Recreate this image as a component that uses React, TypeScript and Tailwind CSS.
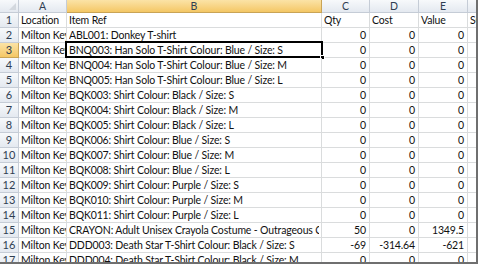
const rows: [string, string, string, string, string][] = [
  ["Milton Keynes", "ABL001: Donkey T-shirt", "0", "0", "0"],
  ["Milton Keynes", "BNQ003: Han Solo T-Shirt Colour: Blue / Size: S", "0", "0", "0"],
  ["Milton Keynes", "BNQ004: Han Solo T-Shirt Colour: Blue / Size: M", "0", "0", "0"],
  ["Milton Keynes", "BNQ005: Han Solo T-Shirt Colour: Blue / Size: L", "0", "0", "0"],
  ["Milton Keynes", "BQK003: Shirt Colour: Black / Size: S", "0", "0", "0"],
  ["Milton Keynes", "BQK004: Shirt Colour: Black / Size: M", "0", "0", "0"],
  ["Milton Keynes", "BQK005: Shirt Colour: Black / Size: L", "0", "0", "0"],
  ["Milton Keynes", "BQK006: Shirt Colour: Blue / Size: S", "0", "0", "0"],
  ["Milton Keynes", "BQK007: Shirt Colour: Blue / Size: M", "0", "0", "0"],
  ["Milton Keynes", "BQK008: Shirt Colour: Blue / Size: L", "0", "0", "0"],
  ["Milton Keynes", "BQK009: Shirt Colour: Purple / Size: S", "0", "0", "0"],
  ["Milton Keynes", "BQK010: Shirt Colour: Purple / Size: M", "0", "0", "0"],
  ["Milton Keynes", "BQK011: Shirt Colour: Purple / Size: L", "0", "0", "0"],
  ["Milton Keynes", "CRAYON: Adult Unisex Crayola Costume - Outrageous Colour", "50", "0", "1349.5"],
  ["Milton Keynes", "DDD003: Death Star T-Shirt Colour: Black / Size: S", "-69", "-314.64", "-621"],
  ["Milton Keynes", "DDD004: Death Star T-Shirt Colour: Black / Size: M", "0", "0", "0"],
]

const grid = "grid grid-cols-[19px_48px_255px_48px_49px_49px_40px]"
const cell = "border-r border-b border-[#dadcdd] overflow-hidden whitespace-nowrap px-[2px]"
const head =
  "border-r border-b border-[#c5ccd6] bg-gradient-to-b from-[#f7f9fb] to-[#e4e9f0] text-[#2f3e52] text-center tracking-normal"
const headSel =
  "border-r border-b border-[#c9a456] bg-gradient-to-b from-[#fbe3a6] to-[#f4c764] text-[#2f3e52] text-center tracking-normal"

export default function App() {
  return (
    <div className="w-[483px] h-[271px] bg-white font-['Lato',sans-serif] text-[10.5px] tracking-[-0.15px] text-[#111]">
      <div className="w-[478px] h-[264px] border-r-2 border-b-2 border-[#6f6f6f] overflow-hidden">
        {/* Column headers */}
        <div className={`${grid} h-[13px] leading-[12px]`}>
          <div className={`${head} relative`}>
            <div className="absolute right-[2px] bottom-[2px] w-0 h-0 border-l-[7px] border-l-transparent border-b-[7px] border-b-[#d3d8de]" />
          </div>
          <div className={head}>A</div>
          <div className={headSel}>B</div>
          <div className={head}>C</div>
          <div className={head}>D</div>
          <div className={head}>E</div>
          <div className={head} />
        </div>

        {/* Row 1 */}
        <div className={`${grid} h-[15px] leading-[14px]`}>
          <div className={`${head} text-[11px]`}>1</div>
          <div className={cell}>Location</div>
          <div className={cell}>Item Ref</div>
          <div className={cell}>Qty</div>
          <div className={cell}>Cost</div>
          <div className={cell}>Value</div>
          <div className={cell}>SOH</div>
        </div>

        {rows.map((r, i) => {
          const n = i + 2
          const sel = n === 3
          return (
            <div key={n} className={`${grid} h-[15px] leading-[14px]`}>
              <div className={`${sel ? headSel : head} text-[11px]`}>{n}</div>
              <div className={cell}>{r[0]}</div>
              <div className={`${cell} relative overflow-visible`}>
                <div className="overflow-hidden">{r[1]}</div>
                {sel && (
                  <>
                    <div className="absolute left-[-2px] top-[-2px] right-[-2px] bottom-[-1px] border-2 border-black pointer-events-none" />
                    <div className="absolute right-[-4px] bottom-[-3px] w-[5px] h-[5px] bg-black border border-white" />
                  </>
                )}
              </div>
              <div className={`${cell} text-right pr-[3px]`}>{r[2]}</div>
              <div className={`${cell} text-right pr-[3px]`}>{r[3]}</div>
              <div className={`${cell} text-right pr-[3px]`}>{r[4]}</div>
              <div className={cell} />
            </div>
          )
        })}
      </div>
    </div>
  )
}
